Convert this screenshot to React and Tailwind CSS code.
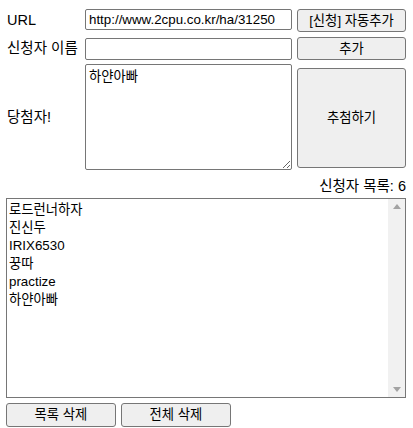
import { useState } from 'react';

const font = { fontFamily: '"Liberation Sans", "Noto Sans CJK KR", sans-serif' };

export default function App() {
  const [url, setUrl] = useState('http://www.2cpu.co.kr/ha/31250');
  const [name, setName] = useState('');
  const [winner, setWinner] = useState('하얀아빠');
  const [list, setList] = useState(['로드런너하자', '진신두', 'IRIX6530', '꿍따', 'practize', '하얀아빠']);

  const btn =
    'bg-[#efefef] border border-[#767676] rounded-[3px] text-[13.33px] text-black leading-none';
  const input =
    'border border-[#767676] rounded-[2px] px-[3px] text-[13.33px] text-black outline-none bg-white';

  return (
    <div className="w-[413px] h-[428px] bg-white text-black pl-[6px] pr-[7px] pt-[9px]" style={font}>
      <div className="grid grid-cols-[74px_207px_109px] gap-x-[5px] items-center">
        <div className="text-[14.5px] pl-[1px]">URL</div>
        <input value={url} onChange={(e) => setUrl(e.target.value)} className={`${input} h-[21px] self-start`} />
        <button className={`${btn} h-[23px]`}>[신청] 자동추가</button>

        <div className="text-[14.5px] pl-[1px] mt-[5px]">신청자 이름</div>
        <input value={name} onChange={(e) => setName(e.target.value)} className={`${input} h-[22px] mt-[5px]`} />
        <button className={`${btn} h-[23px] mt-[5px]`}>추가</button>

        <div className="text-[14.5px] pl-[1px] mt-[5px]">당첨자!</div>
        <textarea
          value={winner}
          onChange={(e) => setWinner(e.target.value)}
          className={`${input} h-[106px] mt-[4px] py-[2px] resize-y`}
        />
        <button className={`${btn} h-[100px] mt-[5px]`}>추첨하기</button>
      </div>

      <div className="text-right text-[14.5px] mt-[7px] leading-[18px]">신청자 목록: {list.length}</div>

      <div className="mt-[3px] w-[400px] h-[200px] border border-[#767676] flex bg-white">
        <ul className="flex-1 pt-[2px] pl-[2px] text-[13.33px] leading-[18px]">
          {list.map((n, i) => (
            <li key={i}>{n}</li>
          ))}
        </ul>
        <div className="w-[17px] bg-[#f1f1f1] flex flex-col justify-between items-center py-[5px]">
          <svg width="8" height="5" viewBox="0 0 8 5">
            <path d="M0 5 L4 0 L8 5 Z" fill="#a3a3a3" />
          </svg>
          <svg width="8" height="5" viewBox="0 0 8 5">
            <path d="M0 0 L4 5 L8 0 Z" fill="#a3a3a3" />
          </svg>
        </div>
      </div>

      <div className="flex gap-[5px] mt-[5px]">
        <button onClick={() => setList([])} className={`${btn} w-[110px] h-[24px]`}>
          목록 삭제
        </button>
        <button onClick={() => setList([])} className={`${btn} w-[110px] h-[24px]`}>
          전체 삭제
        </button>
      </div>
    </div>
  );
}
